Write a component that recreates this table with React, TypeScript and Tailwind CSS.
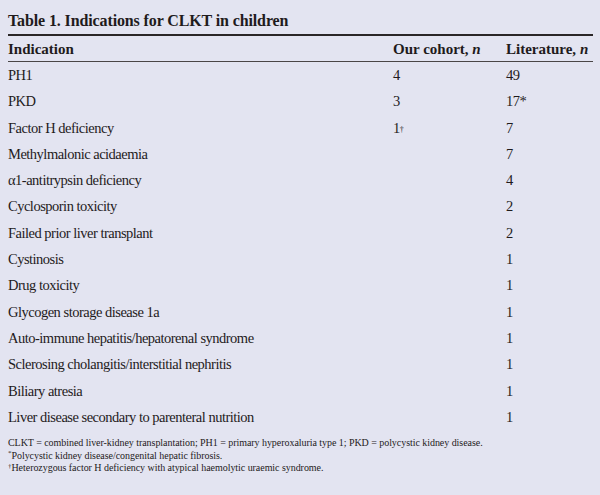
import React from "react";

const rows: [string, React.ReactNode, React.ReactNode][] = [
  ["PH1", "4", "49"],
  ["PKD", "3", "17*"],
  ["Factor H deficiency", <>1<sup className="text-[8px] relative -top-[1px]">†</sup></>, "7"],
  ["Methylmalonic acidaemia", "", "7"],
  ["α1-antitrypsin deficiency", "", "4"],
  ["Cyclosporin toxicity", "", "2"],
  ["Failed prior liver transplant", "", "2"],
  ["Cystinosis", "", "1"],
  ["Drug toxicity", "", "1"],
  ["Glycogen storage disease 1a", "", "1"],
  ["Auto-immune hepatitis/hepatorenal syndrome", "", "1"],
  ["Sclerosing cholangitis/interstitial nephritis", "", "1"],
  ["Biliary atresia", "", "1"],
  ["Liver disease secondary to parenteral nutrition", "", "1"],
];

export default function App() {
  return (
    <div
      className="w-[600px] h-[495px] bg-[#e3e4f1] pl-[8px] pr-[7px] text-[#1f1b1c]"
      style={{ fontFamily: '"Liberation Serif", "Times New Roman", serif' }}
    >
      <div className="pt-[11px] pb-[3px] text-[16px] leading-[20px] font-bold tracking-[-0.12px]">
        Table 1. Indications for CLKT in children
      </div>
      <div className="border-t-2 border-[#2a2627]" />
      <div className="grid grid-cols-[385px_113px_1fr] pt-[3px] pb-[2px] text-[15px] leading-[20px] font-bold">
        <div>Indication</div>
        <div>
          Our cohort, <i>n</i>
        </div>
        <div>
          Literature, <i>n</i>
        </div>
      </div>
      <div className="border-t border-[#4a4647]" />
      <div className="text-[14.5px] tracking-[-0.5px]">
        {rows.map(([a, b, c], i) => (
          <div
            key={i}
            className="grid grid-cols-[385px_113px_1fr] h-[26.3px] items-center leading-[26.3px]"
          >
            <div>{a}</div>
            <div>{b}</div>
            <div>{c}</div>
          </div>
        ))}
      </div>
      <div className="mt-[7px] text-[10px] leading-[12.5px] tracking-[-0.05px]">
        <div>
          CLKT = combined liver-kidney transplantation; PH1 = primary hyperoxaluria type 1; PKD = polycystic kidney disease.
        </div>
        <div>
          <sup className="text-[7px]">*</sup>Polycystic kidney disease/congenital hepatic fibrosis.
        </div>
        <div>
          <sup className="text-[7px]">†</sup>Heterozygous factor H deficiency with atypical haemolytic uraemic syndrome.
        </div>
      </div>
    </div>
  );
}
